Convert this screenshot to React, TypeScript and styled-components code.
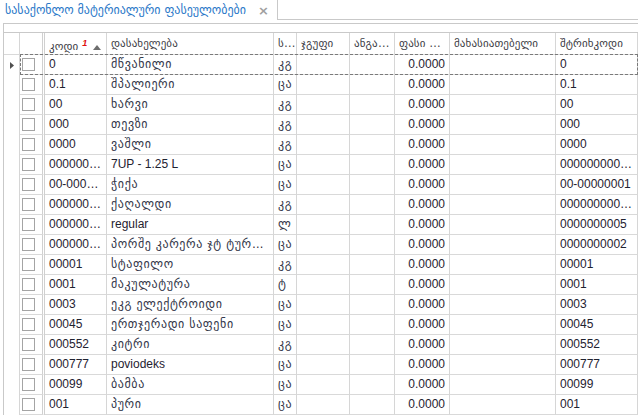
import React from "react";
import styled, { createGlobalStyle, css } from "styled-components";

const GlobalStyle = createGlobalStyle`
  html, body { margin: 0; padding: 0; background: #ffffff; overflow: hidden; }
  body {
    font-family: "Liberation Sans", "DejaVu Sans", sans-serif;
    font-size: 12px;
    color: #1f2230;
  }
`;

const COLS = "16px 25px 62px 167px 23px 53px 45px 55px 106px 82px";

const Page = styled.div`
  width: 638px;
  height: 415px;
  overflow: hidden;
`;

const TabStrip = styled.div`
  display: flex;
  height: 20px;
`;

const Tab = styled.div`
  display: flex;
  align-items: center;
  width: 278px;
  box-sizing: border-box;
  padding-left: 5px;
  border-right: 1px solid #c9c9c9;
`;

const TabTitle = styled.span`
  color: #2a78c8;
  font-family: "DejaVu Sans", sans-serif;
  font-size: 12px;
  white-space: nowrap;
`;

const TabClose = styled.span`
  margin-left: auto;
  margin-right: 8px;
  color: #a0a0a0;
  font-size: 13px;
  font-weight: bold;
  font-family: "DejaVu Sans", sans-serif;
`;

const TabFiller = styled.div`
  flex: 1;
  border-bottom: 1px solid #c9c9c9;
`;

const Panel = styled.div`
  margin: 3px 0 0 3px;
  border-left: 1px solid #c9c9c9;
  border-top: 1px solid #c9c9c9;
  padding-top: 8px;
`;

const Grid = styled.div`
  border-top: 1px solid #c9c9c9;
`;

const HeaderRow = styled.div`
  display: grid;
  grid-template-columns: ${COLS};
  height: 22px;
`;

const BodyRow = styled.div<{ $focused?: boolean }>`
  position: relative;
  display: grid;
  grid-template-columns: ${COLS};
  height: 20px;
  ${(p) =>
    p.$focused &&
    css`
      &::after {
        content: "";
        position: absolute;
        left: 16px;
        right: 0;
        top: -1px;
        bottom: 0;
        border: 1px dashed #7a7a7a;
        pointer-events: none;
      }
    `}
`;

type Kind = "indicator" | "check" | "text" | "num" | "unit" | "sorted";

const Cell = styled.div<{ $kind?: Kind; $header?: boolean }>`
  box-sizing: border-box;
  border-right: 1px solid #d6d6d6;
  border-bottom: 1px solid #d9d9d9;
  padding: ${(p) => (p.$header ? "0 3px 0 4px" : "0 4px")};
  white-space: nowrap;
  overflow: hidden;
  text-overflow: ellipsis;
  line-height: ${(p) => (p.$header ? "21px" : "19px")};
  color: ${(p) => (p.$header ? "#3f3f3f" : "#1f2230")};
  text-align: ${(p) => (p.$kind === "num" ? "right" : "left")};
  ${(p) =>
    p.$kind === "unit" &&
    css`
      padding: 0 0 0 4px;
    `}
  ${(p) =>
    p.$kind === "sorted" &&
    css`
      text-overflow: clip;
    `}
  ${(p) =>
    p.$kind === "indicator" &&
    css`
      padding: 0;
      display: flex;
      align-items: center;
      justify-content: center;
      ${!p.$header && "border-bottom: none;"}
    `}
  ${(p) =>
    p.$kind === "check" &&
    css`
      padding: 0 0 0 2px;
      display: flex;
      align-items: center;
      border-right: 3px double #d0d0d0;
    `}
`;

const Ka = styled.span<{ $header?: boolean }>`
  font-family: "DejaVu Sans", sans-serif;
  font-size: ${(p) => (p.$header ? "11px" : "12px")};
  letter-spacing: ${(p) => (p.$header ? "0.1px" : "0.6px")};
  color: ${(p) => (p.$header ? "#3c3c44" : "#34374a")};
`;

const CheckBox = styled.span`
  display: block;
  width: 13px;
  height: 13px;
  box-sizing: border-box;
  border: 1px solid #a4a4a4;
  background: #ffffff;
`;

const SortBadge = styled.span`
  color: #e01010;
  font-weight: bold;
  font-style: italic;
  font-size: 9px;
  vertical-align: 4px;
  margin-left: 4px;
`;

const SortArrow = styled.svg`
  margin-left: 6px;
  vertical-align: 0px;
`;

const hasGeorgian = (s: string) => /[\u10A0-\u10FF]/.test(s);

const T = ({ text }: { text: string }) =>
  hasGeorgian(text) ? <Ka>{text}</Ka> : <>{text}</>;

type Row = [string, string, string, string];

const rows: Row[] = [
  ["0", "მწვანილი", "კგ", "0"],
  ["0.1", "შპალიერი", "ცა", "0.1"],
  ["00", "ხარვი", "კგ", "00"],
  ["000", "თევზი", "კგ", "000"],
  ["0000", "ვაშლი", "კგ", "0000"],
  ["0000000000", "7UP - 1.25 L", "ცა", "00000000001"],
  ["00-00000001", "ჭიქა", "ცა", "00-00000001"],
  ["0000000003", "ქაღალდი", "კგ", "00000000003"],
  ["0000000005", "regular", "ლ", "0000000005"],
  ["0000000002", "პორშე კარერა ჯტ ტურბო S", "ცა", "0000000002"],
  ["00001", "სტაფილო", "კგ", "00001"],
  ["0001", "მაკულატურა", "ტ", "0001"],
  ["0003", "ეკგ ელექტროიდი", "ცა", "0003"],
  ["00045", "ერთჯერადი საფენი", "ცა", "00045"],
  ["000552", "კიტრი", "კგ", "000552"],
  ["000777", "poviodeks", "ცა", "000777"],
  ["00099", "ბამბა", "ცა", "00099"],
  ["001", "პური", "ცა", "001"],
];

const headers: { label: string; kind?: Kind }[] = [
  { label: "დასახელება" },
  { label: "საზომი ერთეული", kind: "unit" },
  { label: "ჯგუფი" },
  { label: "ანგარიში" },
  { label: "ფასი ნაგულისხმევი" },
  { label: "მახასიათებელი" },
  { label: "შტრიხკოდი" },
];

export default function App() {
  return (
    <Page>
      <GlobalStyle />
      <TabStrip>
        <Tab>
          <TabTitle>სასაქონლო მატერიალური ფასეულობები</TabTitle>
          <TabClose>×</TabClose>
        </Tab>
        <TabFiller />
      </TabStrip>
      <Panel>
        <Grid>
          <HeaderRow>
            <Cell $kind="indicator" $header />
            <Cell $kind="check" $header />
            <Cell $kind="sorted" $header>
              <Ka $header>კოდი</Ka>
              <SortBadge>1</SortBadge>
              <SortArrow width="8" height="5" viewBox="0 0 8 5">
                <path d="M0 5 L4 0 L8 5 Z" fill="#6e6e6e" />
              </SortArrow>
            </Cell>
            {headers.map((h) => (
              <Cell key={h.label} $kind={h.kind} $header>
                <Ka $header>{h.label}</Ka>
              </Cell>
            ))}
          </HeaderRow>
          {rows.map((r, i) => (
            <BodyRow key={i} $focused={i === 0}>
              <Cell $kind="indicator">
                {i === 0 && (
                  <svg width="4" height="7" viewBox="0 0 4 7">
                    <path d="M0 0 L4 3.5 L0 7 Z" fill="#505050" />
                  </svg>
                )}
              </Cell>
              <Cell $kind="check">
                <CheckBox />
              </Cell>
              <Cell>
                <T text={r[0]} />
              </Cell>
              <Cell>
                <T text={r[1]} />
              </Cell>
              <Cell $kind="unit">
                <T text={r[2]} />
              </Cell>
              <Cell />
              <Cell />
              <Cell $kind="num">0.0000</Cell>
              <Cell />
              <Cell>
                <T text={r[3]} />
              </Cell>
            </BodyRow>
          ))}
        </Grid>
      </Panel>
    </Page>
  );
}
